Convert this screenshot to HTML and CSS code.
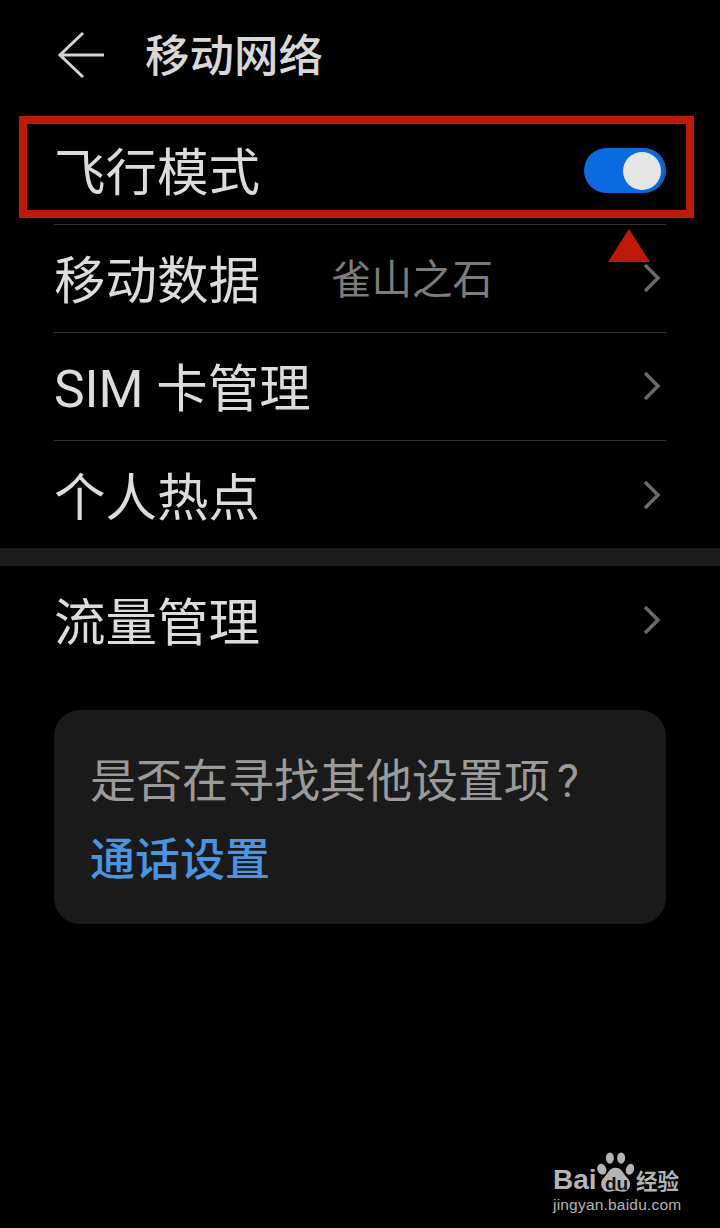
FILE: index.html
```html
<!DOCTYPE html>
<html lang="zh">
<head>
  <meta charset="utf-8">
  <meta name="viewport" content="width=device-width">
  <link rel="stylesheet" href="styles.css">
  <title>移动网络</title>
</head>
<body>
  <div class="header">
    <svg class="back" width="48" height="48" viewBox="0 0 48 48">
      <path d="M26 2 L3 24 L26 46 M3 24 H47"/>
    </svg>
    <div class="header-title">移动网络</div>
  </div>

  <div class="list">
    <div class="row">
      <span class="row-label">飞行模式</span>
      <span class="switch"><span class="knob"></span></span>
    </div>
    <div class="row">
      <span class="row-label">移动数据</span>
      <span class="row-value">雀山之石</span>
      <svg class="chev" width="18" height="32" viewBox="0 0 18 32"><path d="M2 3 L15 16 L2 29"/></svg>
    </div>
    <div class="row">
      <span class="row-label">SIM 卡管理</span>
      <svg class="chev" width="18" height="32" viewBox="0 0 18 32"><path d="M2 3 L15 16 L2 29"/></svg>
    </div>
    <div class="row row-last">
      <span class="row-label">个人热点</span>
      <svg class="chev" width="18" height="32" viewBox="0 0 18 32"><path d="M2 3 L15 16 L2 29"/></svg>
    </div>
  </div>

  <div class="band"></div>

  <div class="list">
    <div class="row row-last">
      <span class="row-label">流量管理</span>
      <svg class="chev" width="18" height="32" viewBox="0 0 18 32"><path d="M2 3 L15 16 L2 29"/></svg>
    </div>
  </div>

  <div class="card">
    <div class="card-text">是否在寻找其他设置项<span class="qmark">?</span></div>
    <div class="card-link">通话设置</div>
  </div>

  <!-- annotation drawn over the screenshot -->
  <div class="mark-box"></div>
  <div class="mark-arrow"></div>

  <div class="watermark">
    <div class="wm-logo">
      <span class="wm-bai">Bai</span>
      <svg class="wm-paw" width="37" height="41" viewBox="0 0 46 50">
        <ellipse cx="6" cy="21" rx="5.500" ry="7" transform="rotate(-20 6 21)"/>
        <ellipse cx="16" cy="7" rx="5" ry="7"/>
        <ellipse cx="30" cy="7" rx="5" ry="7"/>
        <ellipse cx="41" cy="21" rx="5" ry="7" transform="rotate(20 41 21)"/>
        <path d="M23 19 C15 19 13 27 8 32 C2 38 6 49 15 49 C19 49 21 47.500 23 47.500 C25 47.500 28 49 32 49 C41 49 44 38 38 32 C33 27 31 19 23 19 Z"/>
      </svg>
      <span class="wm-du">du</span>
      <span class="wm-cn">经验</span>
    </div>
    <div class="wm-url">jingyan.baidu.com</div>
  </div>
</body>
</html>
```

FILE: styles.css
```css
* { box-sizing: border-box; }
html, body { margin: 0; padding: 0; }
body {
  position: relative;
  width: 720px;
  height: 1228px;
  overflow: hidden;
  background-color: #000;
  color: #dcdcdc;
  font-family: Roboto, "Noto Sans CJK SC", sans-serif;
}

.header {
  display: flex;
  align-items: center;
  height: 109px;
  padding-left: 57px;
}
.back { fill: none; stroke: #d4d4d4; stroke-width: 3; }
.header-title {
  margin-left: 40px;
  margin-top: 6px;
  font-size: 44.500px;
  font-weight: 500;
  line-height: 1;
  color: #d8d8d8;
}

.list { margin: 0 54px; padding-top: 8px; }
.list + .band + .list { padding-top: 0; }
.row {
  position: relative;
  display: flex;
  align-items: center;
  height: 108px;
  border-bottom: 1px solid #303030;
}
.row-last { border-bottom: 0; }
.row-label {
  margin-top: 7px;
  font-size: 51.500px;
  line-height: 1;
}
.row-value {
  margin-left: 71px;
  margin-bottom: 4px;
  font-size: 40.500px;
  color: #7c7c7c;
}
.chev {
  margin-left: auto;
  margin-right: 5px;
  margin-bottom: 1px;
  fill: none;
  stroke: #6a6a6a;
  stroke-width: 3.500;
}

.switch {
  display: flex;
  align-items: center;
  justify-content: flex-end;
  width: 82px;
  height: 45px;
  margin-left: auto;
  padding-right: 5px;
  border-radius: 23px;
  background-color: #0a6adf;
  box-shadow: inset -2px 0 1px #1d5aa6;
}
.knob {
  width: 38px;
  height: 38px;
  border-radius: 50%;
  background-color: #e6e6e6;
}

.band {
  height: 18px;
  margin-top: -1px;
  background-color: #1c1c1c;
}

.card {
  height: 214px;
  margin: 36px 54px 0;
  padding: 44px 36px 0;
  border-radius: 26px;
  background-color: #1a1a1a;
}
.card-text {
  font-size: 46px;
  line-height: 54px;
  color: #9a9a9a;
}
.qmark { margin-left: 7px; }
.card-link {
  margin-top: 26px;
  font-size: 45px;
  font-weight: 500;
  line-height: 54px;
  color: #4a94e4;
}

.mark-box {
  position: absolute;
  left: 19px;
  top: 116px;
  width: 675px;
  height: 102px;
  border: 8px solid #bd1a0b;
}
.mark-arrow {
  position: absolute;
  left: 608px;
  top: 229px;
  width: 0;
  height: 0;
  border-left: 21px solid transparent;
  border-right: 21px solid transparent;
  border-bottom: 33px solid #bd1a0b;
}

.watermark {
  position: absolute;
  left: 553px;
  top: 1150px;
  width: 130px;
  color: #b4b4b4;
}
.wm-logo {
  position: relative;
  height: 46px;
}
.wm-bai {
  position: absolute;
  left: 0;
  top: 15px;
  font-family: "Liberation Sans", sans-serif;
  font-size: 28px;
  font-weight: bold;
  line-height: 30px;
}
.wm-paw { position: absolute; left: 44px; top: 2px; fill: #b4b4b4; }
.wm-du {
  position: absolute;
  left: 52px;
  top: 25px;
  font-family: "Liberation Sans", sans-serif;
  font-size: 19px;
  font-weight: bold;
  line-height: 18px;
  color: #111;
}
.wm-cn {
  position: absolute;
  left: 83px;
  top: 15px;
  font-family: "Noto Sans CJK SC", sans-serif;
  font-size: 21.500px;
  font-weight: 700;
  line-height: 30px;
  white-space: nowrap;
}
.wm-url {
  font-family: "Liberation Sans", sans-serif;
  font-size: 15.500px;
  line-height: 18px;
  letter-spacing: 0.200px;
  white-space: nowrap;
}
```
